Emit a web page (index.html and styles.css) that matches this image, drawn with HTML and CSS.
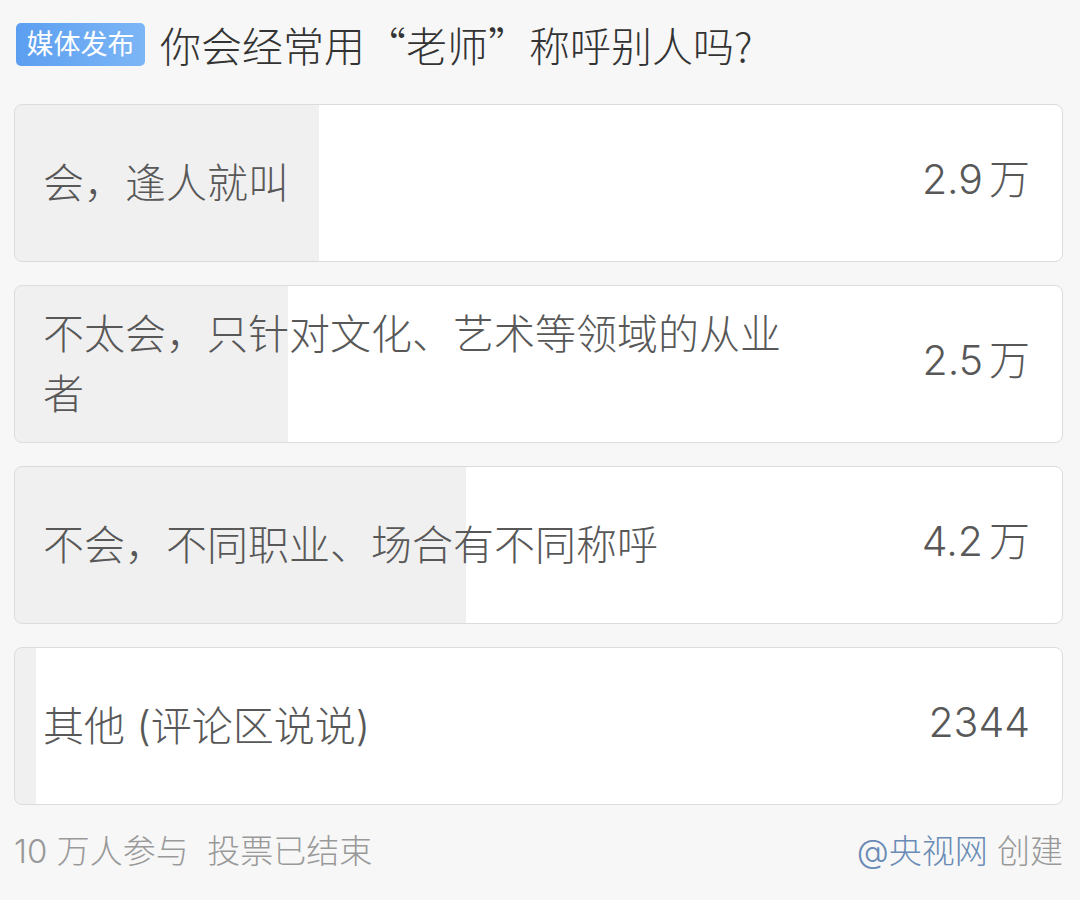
FILE: index.html
```html
<!DOCTYPE html>
<html lang="zh-CN">

<head>
    <meta charset="UTF-8">
    <meta name="viewport" content="width=device-width, initial-scale=1.0">
    <title>投票</title>
    <link rel="stylesheet" href="styles.css">
</head>

<body>
    <div class="poll">
        <div class="poll-head">
            <span class="badge">媒体发布</span>
            <h1 class="question">你会经常用“老师”称呼别人吗?</h1>
        </div>

        <div class="options">
            <div class="option" style="--pct: 29%">
                <span class="label">会，逢人就叫</span>
                <span class="count">2.9<span class="unit">万</span></span>
            </div>
            <div class="option" style="--pct: 26.1%">
                <span class="label">不太会，只针对文化、艺术等领域的从业者</span>
                <span class="count">2.5<span class="unit">万</span></span>
            </div>
            <div class="option" style="--pct: 43.1%">
                <span class="label">不会，不同职业、场合有不同称呼</span>
                <span class="count">4.2<span class="unit">万</span></span>
            </div>
            <div class="option" style="--pct: 2%">
                <span class="label">其他 (评论区说说)</span>
                <span class="count">2344</span>
            </div>
        </div>

        <div class="poll-foot">
            <span class="meta">10 万人参与&nbsp;&nbsp;投票已结束</span>
            <span class="creator"><span class="author">@央视网</span> 创建</span>
        </div>
    </div>
</body>

</html>
```

FILE: styles.css
```css
body {
    margin: 0;
    background: #f7f7f7;
    font-family: Inter, "Noto Sans CJK SC", sans-serif;
    font-weight: 300;
}

.poll {
    width: 1049px;
    padding: 22px 0 0 14px;
}

.poll-head {
    display: flex;
    align-items: center;
    gap: 15px;
    padding-left: 2px;
    height: 44px;
}

.badge {
    display: inline-flex;
    align-items: center;
    justify-content: center;
    width: 129px;
    height: 43px;
    border-radius: 5px;
    background: linear-gradient(to right, #5c9ef0, #7cb6f6);
    color: #fff;
    font-size: 27px;
    font-weight: 400;
    line-height: 1;
}

.question {
    margin: 0;
    font-family: "Noto Sans CJK SC", sans-serif;
    font-size: 41px;
    font-weight: 300;
    color: #333;
    line-height: 1;
}

.options {
    display: flex;
    flex-direction: column;
    gap: 23px;
    margin-top: 38px;
}

.option {
    display: flex;
    align-items: center;
    justify-content: space-between;
    box-sizing: border-box;
    min-height: 158px;
    padding: 16px 32px 16px 28px;
    border: 1px solid #dcdcdc;
    border-radius: 8px;
    background: linear-gradient(to right, #f0f0f0 var(--pct), #fff var(--pct));
    color: #585858;
    font-size: 41px;
    line-height: 60px;
}

.label {
    max-width: 775px;
}

.count {
    white-space: nowrap;
    margin-top: -8px;
}

.unit {
    margin-left: 6px;
}

.poll-foot {
    display: flex;
    justify-content: space-between;
    margin-top: 26px;
    font-size: 33px;
    line-height: 40px;
    color: #999;
}

.author {
    color: #6a8bb5;
}
```
